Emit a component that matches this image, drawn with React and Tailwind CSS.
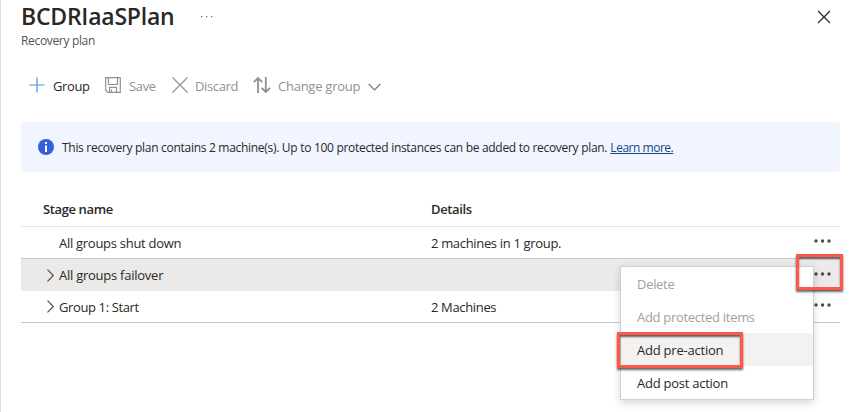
import React from "react";

function Dots() {
  return (
    <svg width="17" height="4" viewBox="0 0 17 4" fill="#4a4a4a" className="mr-[9px] mb-[3px]">
      <circle cx="2" cy="2" r="1.7" />
      <circle cx="8.5" cy="2" r="1.7" />
      <circle cx="15" cy="2" r="1.7" />
    </svg>
  );
}

function Chevron() {
  return (
    <svg width="8" height="13" viewBox="0 0 8 13" fill="none" stroke="#444" strokeWidth="1.1">
      <path d="M.5 .7 6.3 6.5 .5 12.3" />
    </svg>
  );
}

function Row({ name, details, expandable, className, nameClass, detailsClass }) {
  return (
    <div className={"flex h-8 items-center border-[#c8c8c8] text-[13px] " + className}>
      <div className="flex w-[410px] items-center pl-[26px]">
        <span className="w-3">{expandable && <Chevron />}</span>
        <span className={"pt-0.5 " + nameClass}>{name}</span>
      </div>
      <span className={"flex-1 pt-0.5 " + detailsClass}>{details}</span>
      <Dots />
    </div>
  );
}

function MenuItem({ children, className }) {
  return (
    <div className={"flex h-[33px] items-center pt-0.5 pl-4 text-[13px] whitespace-nowrap " + className}>
      <span>{children}</span>
    </div>
  );
}

export default function App() {
  return (
    <main className="relative h-[412px] w-[859px] overflow-hidden border-l border-[#dedede] bg-white pr-[19px] pl-5 font-['Open_Sans','Noto_Sans',sans-serif] text-[#292827]">
      <header className="flex h-[50px] items-start justify-between">
        <div>
          <div className="flex h-[33px] items-center">
            <h1 className="w-[180px] text-[23px] leading-[33px] font-semibold tracking-[-0.23px] whitespace-nowrap">BCDRIaaSPlan</h1>
            <svg width="12" height="3" viewBox="0 0 12 3" fill="#666">
              <path d="M0 1h1.3v1.3H0zM5 1h1.3v1.3H5zM10 1h1.3v1.3H10z" />
            </svg>
          </div>
          <p className="text-[12px] leading-4 tracking-[-0.33px] text-[#55534f]">Recovery plan</p>
        </div>
        <svg width="14" height="14" viewBox="0 0 14 14" className="mt-[10px] mr-[9px]" stroke="#292827" strokeWidth="1.2">
          <path d="m1 1 12 12M13 1 1 13" />
        </svg>
      </header>

      <nav className="mt-[21px] flex h-7 items-center pl-2 text-[13px] whitespace-nowrap text-[#93918f]">
        <svg width="16" height="16" viewBox="0 0 16 16" fill="none" stroke="#4a94e0" strokeWidth="1.2">
          <path d="M8 .5v15M.5 8h15" />
        </svg>
        <span className="ml-2 w-[52px] pt-[3px] tracking-[-0.4px] text-[#292827]">Group</span>
        <svg width="16" height="16" viewBox="0 0 16 16" fill="none" stroke="#93918f" strokeWidth="1.2">
          <path d="M.7.7h14.6v14.6H2.8L.7 13.2zM3.5.7v6.8h9V.7M4.5 15.3v-5h7v5M6.5 12.5v2.8" />
        </svg>
        <span className="ml-2 w-[43px] pt-[3px] tracking-[-0.35px]">Save</span>
        <svg width="16" height="16" viewBox="0 0 16 16" fill="none" stroke="#93918f" strokeWidth="1.2">
          <path d="m.5.5 15 15M15.5.5l-15 15" />
        </svg>
        <span className="ml-[7px] w-[58px] pt-[3px] tracking-[-0.35px]">Discard</span>
        <svg width="18" height="16" viewBox="0 0 18 16" fill="none" stroke="#93918f" strokeWidth="1.8">
          <path d="M5 16V1.2M.8 5.2 5 1l4.2 4.2M12.8 0v14.8M8.6 10.8l4.2 4.2 4.2-4.2" />
        </svg>
        <span className="ml-[7px] w-[90px] pt-[3px] tracking-[-0.25px]">Change group</span>
        <svg width="13" height="8" viewBox="0 0 13 8" fill="none" stroke="#777" strokeWidth="1.2" className="mt-1">
          <path d="m.7 1 5.8 5.8L12.3 1" />
        </svg>
      </nav>

      <section className="mt-[23px] flex h-[50px] items-center rounded-sm bg-[#f0f5ff] pl-[17px] text-[12px]">
        <svg width="16" height="16" viewBox="0 0 16 16" className="mb-px">
          <circle cx="8" cy="8" r="8" fill="#375fdb" />
          <path d="M7 3h2v2H7zM7 6.5h2V13H7z" fill="white" />
        </svg>
        <p className="ml-2 pt-0.5 whitespace-nowrap">
          <span className="tracking-[-0.296px]">This recovery plan contains 2 machine(s). Up to 100 protected instances can be added to recovery plan.</span>{" "}
          <a className="tracking-[-0.48px] text-[#174583] underline underline-offset-1">Learn more.</a>
        </p>
      </section>

      <section className="mt-[21px]">
        <div className="flex h-[34px] items-center border-b border-[#e5e5e5] pt-px pl-[22px] text-[13px] font-semibold">
          <span className="w-[388px] tracking-[-0.38px]">Stage name</span>
          <span className="tracking-[-0.38px]">Details</span>
        </div>
        <Row name="All groups shut down" details="2 machines in 1 group." className="border-b" nameClass="tracking-[-0.28px]" detailsClass="tracking-[-0.33px]" />
        <Row name="All groups failover" expandable className="bg-[#ebeae8]" nameClass="tracking-[-0.25px]" />
        <Row name="Group 1: Start" details="2 Machines" expandable className="border-b" nameClass="tracking-[-0.38px]" detailsClass="tracking-[-0.35px]" />
      </section>

      <div className="absolute top-[266px] left-[619px] w-[194px] border border-[#d0d0d0] bg-white shadow-[0_3px_8px_rgba(0,0,0,0.16)]">
        <MenuItem className="tracking-[-0.3px] text-[#a19f9d]">Delete</MenuItem>
        <MenuItem className="tracking-[-0.3px] text-[#a19f9d]">Add protected items</MenuItem>
        <MenuItem className="bg-[#f3f2f1] tracking-[-0.22px]">Add pre-action</MenuItem>
        <MenuItem className="tracking-[-0.25px]">Add post action</MenuItem>
      </div>
      <div className="absolute top-[332px] left-[616px] h-9 w-[126px] border-3 border-[#fc594a] shadow-[0_2px_2px_rgba(0,0,0,0.6),inset_0_2px_2px_rgba(0,0,0,0.6)]" />
      <div className="absolute top-[254px] left-[795px] h-9 w-[47px] border-3 border-[#fc594a] shadow-[0_2px_2px_rgba(0,0,0,0.6),inset_0_2px_2px_rgba(0,0,0,0.6)]" />
    </main>
  );
}
